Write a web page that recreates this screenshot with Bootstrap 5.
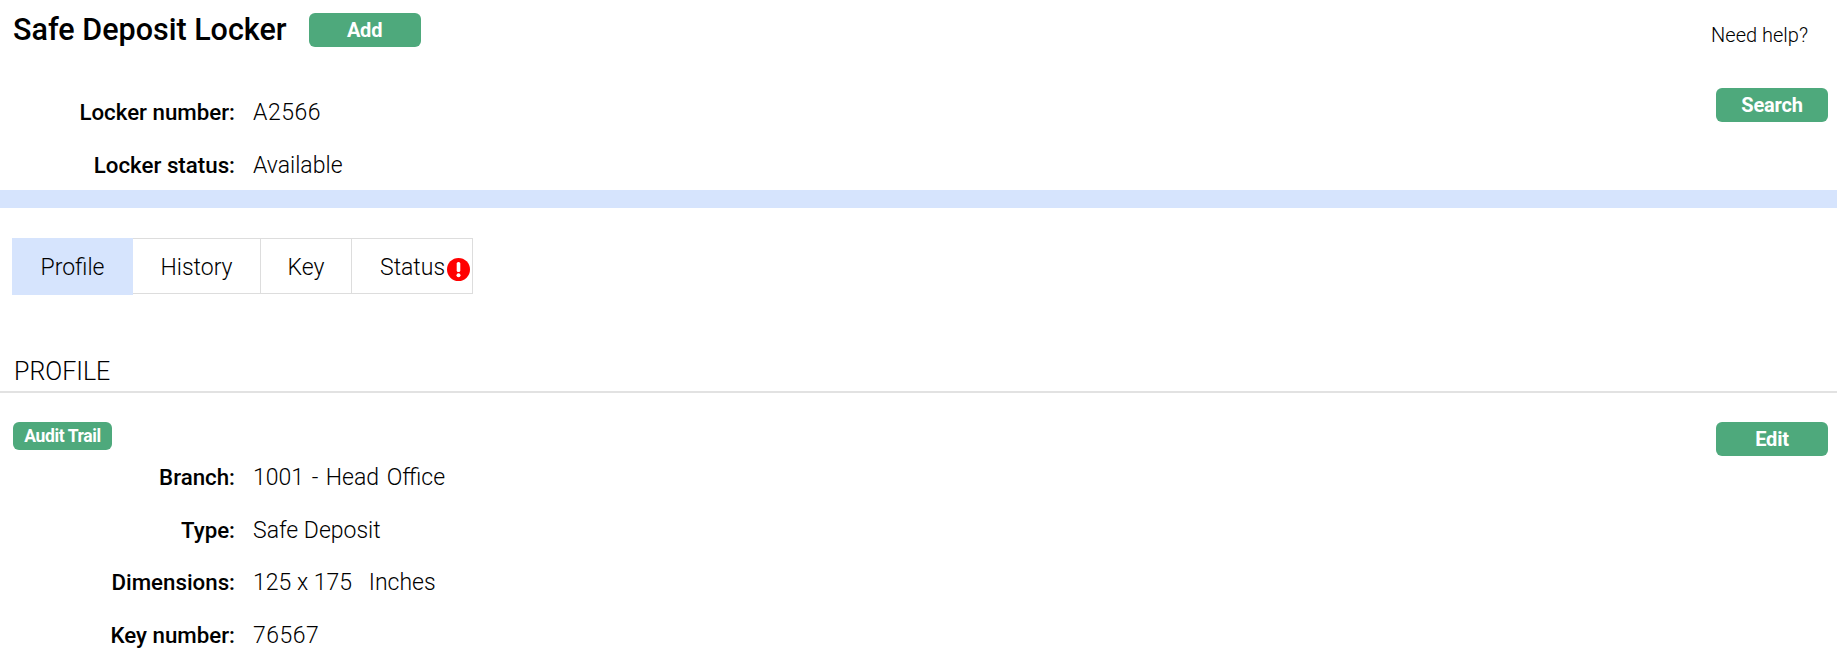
<!DOCTYPE html>
<html lang="en">
<head>
  <meta charset="UTF-8">
  <title>Safe Deposit Locker</title>
  <meta name="viewport" content="width=device-width, initial-scale=1">
  <link href="https://cdn.jsdelivr.net/npm/bootstrap@5.3.0/dist/css/bootstrap.min.css" rel="stylesheet">
  <style>
    body { font-family: Roboto, "Liberation Sans", sans-serif; font-size: 23px; font-weight: 300; color: #000; background: #fff; }
    .page-top { height: 86px; padding: 13px 9px 0 13px; }
    .page-title { font-size: 30.5px; font-weight: 500; line-height: 34px; margin: 0 22px 0 0; }
    .btn-green { background: #4ea97c; border: 0; color: #fff; font-weight: 700; font-size: 20px; line-height: 34px; width: 112px; height: 34px; padding: 0; border-radius: 6px; letter-spacing: -.2px; }
    .btn-green:hover { background: #4ea97c; color: #fff; }
    .help-text { font-size: 20px; font-weight: 300; margin: 10px 20px 0 0; line-height: 24px; }
    .field-row { height: 52.5px; align-items: center; }
    .field-label { width: 235px; text-align: right; font-size: 22.3px; font-weight: 500; margin-right: 18px; padding-top: 1px; }
    .field-text { padding-top: 2px; }
    .num-text { letter-spacing: .5px; }
    .wide-words { word-spacing: 2px; }
    .right-btn { margin-right: 9px; }
    .search-btn { margin-top: 2px; }
    .locker-search { height: 104px; }
    .band { height: 18px; background: #d6e4fd; }
    .tab-strip { --bs-list-group-border-radius: 0; margin: 30px 0 0 12px; }
    .tab-strip .list-group-item { border-color: #ddd; padding: 0; height: 56px; line-height: 57px; text-align: center; color: #000; font-size: 23px; }
    .tab-strip .list-group-item.active { background: #d6e4fd; border-color: #d6e4fd; height: 57px; color: #000; width: 121px; }
    .tab-history { width: 128px; }
    .tab-key { width: 91px; }
    .tab-status { width: 121px; padding-left: 28px !important; text-align: left !important; white-space: nowrap; }
    .warn-icon { width: 23px; height: 23px; vertical-align: -6px; margin-left: 2px; }
    .section-title { margin: 62px 0 0; padding: 0 0 4px 14px; font-size: 25px; line-height: 30px; font-weight: 300; border-bottom: 2px solid #e2e2e2; }
    .profile-top { padding: 29px 0 0 13px; height: 58px; }
    .btn-audit { background: #4ea97c; border: 0; color: #fff; font-weight: 700; font-size: 17.5px; line-height: 28px; height: 28px; width: 99px; padding: 0; border-radius: 6px; letter-spacing: -.4px; }
    .btn-audit:hover { background: #4ea97c; color: #fff; }
  </style>
</head>
<body>
  <div class="page-top d-flex align-items-start">
    <h1 class="page-title">Safe Deposit Locker</h1>
    <button type="button" class="btn btn-green">Add</button>
    <div class="help-text ms-auto">Need help?</div>
  </div>

  <div class="locker-search d-flex justify-content-between align-items-start">
    <div>
      <div class="field-row d-flex"><div class="field-label">Locker number:</div><div class="field-text num-text">A2566</div></div>
      <div class="field-row d-flex"><div class="field-label">Locker status:</div><div class="field-text">Available</div></div>
    </div>
    <button type="button" class="btn btn-green right-btn search-btn">Search</button>
  </div>

  <div class="band"></div>

  <div class="list-group list-group-horizontal tab-strip align-items-start">
    <a href="#" class="list-group-item active">Profile</a>
    <a href="#" class="list-group-item tab-history">History</a>
    <a href="#" class="list-group-item tab-key">Key</a>
    <a href="#" class="list-group-item tab-status">Status<svg class="warn-icon" viewBox="0 0 23 23"><circle cx="11.5" cy="11.5" r="11.5" fill="#f00"/><rect x="9.7" y="4" width="3.6" height="10" rx="1.6" fill="#fff"/><circle cx="11.5" cy="17.2" r="2" fill="#fff"/></svg></a>
  </div>

  <h2 class="section-title">PROFILE</h2>

  <div class="profile-top d-flex justify-content-between align-items-start">
    <button type="button" class="btn btn-audit">Audit Trail</button>
    <button type="button" class="btn btn-green right-btn">Edit</button>
  </div>

  <div class="field-row d-flex"><div class="field-label">Branch:</div><div class="field-text wide-words">1001 - Head Office</div></div>
  <div class="field-row d-flex"><div class="field-label">Type:</div><div class="field-text">Safe Deposit</div></div>
  <div class="field-row d-flex"><div class="field-label">Dimensions:</div><div class="field-text">125 x 175 &nbsp; Inches</div></div>
  <div class="field-row d-flex"><div class="field-label">Key number:</div><div class="field-text num-text">76567</div></div>

  <script src="https://cdn.jsdelivr.net/npm/bootstrap@5.3.0/dist/js/bootstrap.bundle.min.js"></script>
</body>
</html>
